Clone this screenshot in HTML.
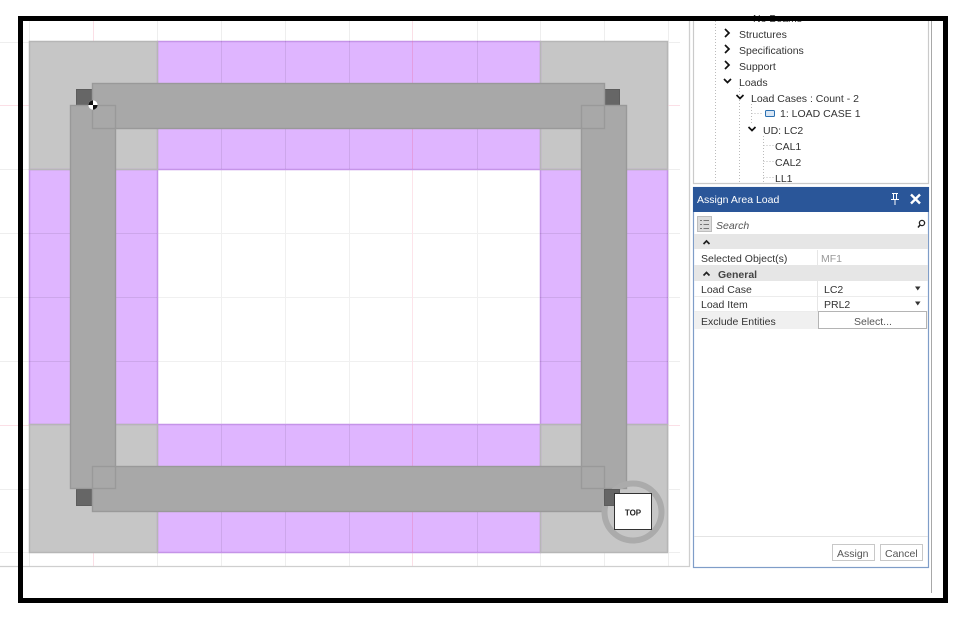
<!DOCTYPE html>
<html><head><meta charset="utf-8"><style>
html,body{margin:0;padding:0;background:#fff;width:955px;height:621px;overflow:hidden}
body{position:relative;font-family:"Liberation Sans",sans-serif;font-size:10.5px;color:#333}
.t{position:absolute;white-space:nowrap;line-height:14px;filter:blur(.3px)}
svg{position:absolute;left:0;top:0}
</style></head><body>
<svg width="955" height="621" viewBox="0 0 955 621" style="filter:blur(.35px)">
<g stroke="#eeeeee" fill="none">
<path d="M29.5 21V566M157.5 21V566M221.5 21V566M285.5 21V566M349.5 21V566M477.5 21V566M540.5 21V566M604.5 21V566M668.5 21V566"/>
<path d="M0 42.5H680M0 169.5H680M0 233.5H680M0 297.5H680M0 361.5H680M0 489.5H680M0 552.5H680"/>
</g>
<g stroke="#fbdfe6" fill="none"><path d="M93.5 21V566M412.5 21V566M0 105.5H680M0 425.5H680"/></g>
<!-- slab -->
<rect x="29.5" y="41.5" width="638" height="511" fill="#c6c6c6"/>
<path d="M157 41H540V169H157ZM157 425H540V552H157ZM29 169H157V425H29ZM540 169H668V425H540Z" fill="#dfb5ff"/>
<rect x="157" y="169" width="383" height="256" fill="#fff"/>
<g stroke="#f0f0f0" fill="none"><path d="M221.5 169V425M285.5 169V425M349.5 169V425M477.5 169V425M157 233.5H540M157 297.5H540M157 361.5H540"/></g>
<path d="M412.5 169V425" stroke="#fde4ea" fill="none"/>
<g fill="none" stroke="#c594e8" stroke-width="1.5"><path d="M157.5 41.5H540.5V552.5H157.5ZM29.5 169.5H667.5V424.5H29.5Z"/></g>
<g fill="none" stroke="#b6b6b6" stroke-width="1.5"><path d="M29.5 41.5H157.5V169.5H29.5ZM540.5 41.5H667.5V169.5H540.5ZM29.5 424.5H157.5V552.5H29.5ZM540.5 424.5H667.5V552.5H540.5Z"/></g>
<g stroke="#000" stroke-opacity=".08" fill="none">
<path d="M221.5 41V169M285.5 41V169M349.5 41V169M477.5 41V169M221.5 425V552M285.5 425V552M349.5 425V552M477.5 425V552M29 233.5H157M29 297.5H157M29 361.5H157M540 233.5H668M540 297.5H668M540 361.5H668"/>
</g>
<g stroke="#f06a9a" stroke-opacity=".3" fill="none"><path d="M412.5 41V169M412.5 425V552"/></g>
<!-- column squares -->
<g fill="#666" stroke="#5c5c5c"><rect x="76.5" y="89.5" width="17" height="16"/><rect x="604.5" y="89.5" width="15" height="16"/><rect x="76.5" y="489.5" width="17" height="16"/></g>
<!-- beams -->
<g fill="#a8a8a8">
<rect x="70" y="105" width="46" height="384"/><rect x="581" y="105" width="46" height="384"/>
<rect x="92" y="83" width="513" height="46"/><rect x="92" y="466" width="513" height="46"/>
</g>
<g fill="none" stroke="#999" stroke-width="1.4">
<rect x="70.5" y="105.5" width="45" height="383"/><rect x="581.5" y="105.5" width="45" height="383"/>
<rect x="92.5" y="83.5" width="512" height="45"/><rect x="92.5" y="466.5" width="512" height="45"/>
</g>
<!-- origin marker -->
<circle cx="93" cy="105" r="4.6" fill="#fff"/>
<path d="M93 105V100.4A4.6 4.6 0 0 0 88.4 105ZM93 105V109.6A4.6 4.6 0 0 0 97.6 105Z" fill="#111"/>
<!-- nav cube -->
<circle cx="633" cy="512" r="28.5" fill="none" stroke="#ababab" stroke-width="6"/>
<rect x="604.5" y="489.5" width="15" height="16" fill="#666" stroke="#5c5c5c"/>
<rect x="614.5" y="493.5" width="37" height="36" fill="#fff" stroke="#333"/>
<text x="633" y="515.5" font-family="Liberation Sans" font-size="8" font-weight="bold" text-anchor="middle" fill="#222">TOP</text>
<!-- canvas border -->
<path d="M0 566.5H689.5V21" fill="none" stroke="#cfcfcf" stroke-width="1.3"/>
<path d="M931.5 21V593" stroke="#a8a8a8" fill="none"/>
<!-- tree panel -->
<path d="M693.5 21V183.5H928.5V21" fill="none" stroke="#cacaca" stroke-width="1.2"/>
<g fill="none" stroke="#bbb" stroke-dasharray="1 2">
<path d="M715.5 21V183M739.5 88V183M751.5 104V124M751.5 113.5H763M763.5 136V183M763.5 145.5H774M763.5 161.5H774M763.5 177.5H774"/>
</g>
<g fill="none" stroke="#111" stroke-width="1.7">
<path d="M725 29L729 33L725 37M725 45L729 49L725 53M725 61L729 65L725 69M724 79L727.5 82.5L731 79M736.5 95L740 98.5L743.5 95M748.5 127L752 130.5L755.5 127"/>
</g>
<rect x="765.5" y="110.5" width="9" height="6" rx="1" fill="#d8e6f5" stroke="#2a6fb0"/>
<!-- property panel -->
<rect x="693.5" y="187.5" width="235" height="380" fill="#fff" stroke="#7f9dc8" stroke-width="1.2"/>
<rect x="693" y="187" width="236" height="25" fill="#2a5699"/>
<path d="M892 193.5H898M893.5 194V199M896.5 194V199M891 199.5H899M895 200V205" stroke="#fff" fill="none"/>
<path d="M911 194.5L920 203.5M920 194.5L911 203.5" stroke="#fff" stroke-width="2.4" fill="none"/>
<rect x="697.5" y="216.5" width="14" height="15" fill="#dcdcdc" stroke="#bdbdbd"/>
<path d="M700 220.5H702M703.5 220.5H709M700 224.5H702M703.5 224.5H709M700 228.5H702M703.5 228.5H709" stroke="#777" fill="none"/>
<circle cx="922" cy="223" r="2.6" fill="none" stroke="#222" stroke-width="1.3"/>
<path d="M920 225L918 227.5" stroke="#222" stroke-width="1.5"/>
<rect x="694" y="234" width="234" height="15" fill="#e6e6e6"/>
<rect x="694" y="265" width="234" height="16" fill="#e6e6e6"/>
<rect x="694" y="312" width="234" height="17" fill="#f0f0f0"/>
<path d="M703.5 244L706.5 241L709.5 244M703.5 275.5L706.5 272.5L709.5 275.5" fill="none" stroke="#222" stroke-width="1.7"/>
<path d="M694 296.5H928M694 311.5H928" stroke="#ececec" fill="none"/>
<path d="M817.5 250V312" stroke="#e6e6e6" fill="none"/>
<rect x="818.5" y="311.5" width="108" height="17" fill="#fff" stroke="#b4b4b4"/>
<path d="M915 286.5H920.5L917.75 290.5ZM915 301.5H920.5L917.75 305.5Z" fill="#333"/>
<path d="M694 536.5H928" stroke="#e4e4e4" fill="none"/>
<rect x="832.5" y="544.5" width="42" height="16" fill="#fff" stroke="#c8c8c8"/>
<rect x="880.5" y="544.5" width="42" height="16" fill="#fff" stroke="#c8c8c8"/>
</svg>
<div class="t" style="left:753px;top:12px">No Beams</div>
<div class="t" style="left:739px;top:28px">Structures</div>
<div class="t" style="left:739px;top:44px">Specifications</div>
<div class="t" style="left:739px;top:60px">Support</div>
<div class="t" style="left:739px;top:76px">Loads</div>
<div class="t" style="left:751px;top:92px">Load Cases : Count - 2</div>
<div class="t" style="left:780px;top:107px">1: LOAD CASE 1</div>
<div class="t" style="left:763px;top:124px">UD: LC2</div>
<div class="t" style="left:775px;top:140px">CAL1</div>
<div class="t" style="left:775px;top:156px">CAL2</div>
<div class="t" style="left:775px;top:172px">LL1</div>
<div class="t" style="left:697px;top:193px;color:#fff">Assign Area Load</div>
<div class="t" style="left:716px;top:219px;color:#555;font-style:italic">Search</div>
<div class="t" style="left:701px;top:252px">Selected Object(s)</div>
<div class="t" style="left:821px;top:252px;color:#999">MF1</div>
<div class="t" style="left:718px;top:268px;font-weight:bold;color:#444">General</div>
<div class="t" style="left:701px;top:283px">Load Case</div>
<div class="t" style="left:824px;top:283px">LC2</div>
<div class="t" style="left:701px;top:298px">Load Item</div>
<div class="t" style="left:824px;top:298px">PRL2</div>
<div class="t" style="left:701px;top:315px">Exclude Entities</div>
<div class="t" style="left:854px;top:315px;color:#555">Select...</div>
<div class="t" style="left:837px;top:547px;color:#555">Assign</div>
<div class="t" style="left:885px;top:547px;color:#555">Cancel</div>
<svg width="955" height="621" viewBox="0 0 955 621"><rect x="20.5" y="18.5" width="925" height="582" fill="none" stroke="#000" stroke-width="5"/></svg>
</body></html>
